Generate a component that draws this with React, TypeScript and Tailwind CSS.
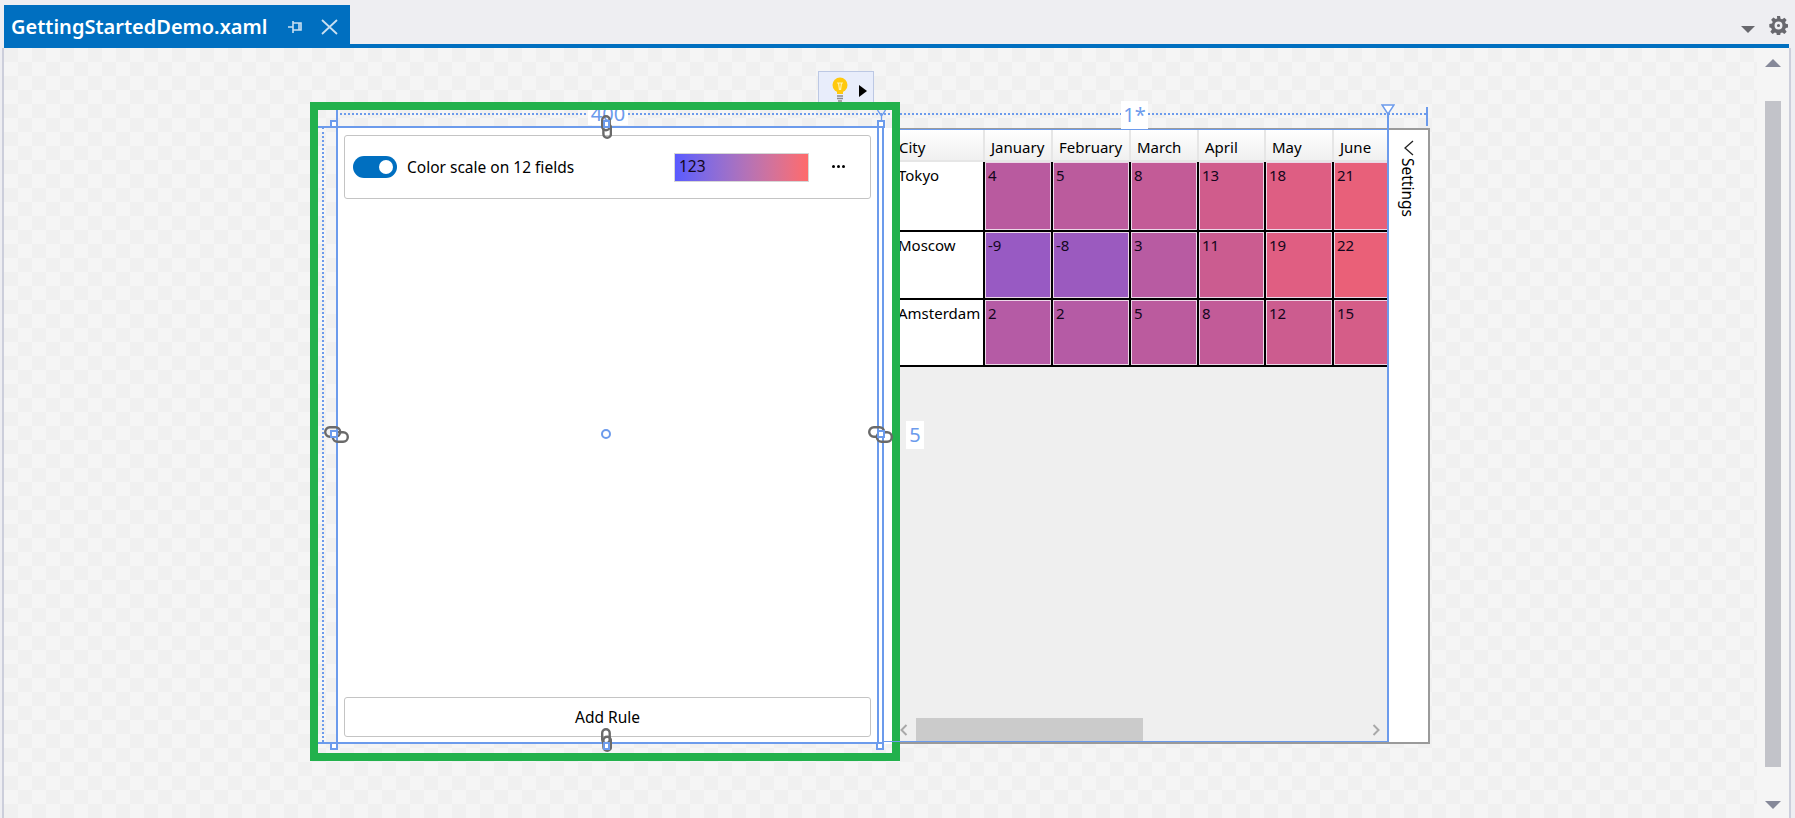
const font = "font-['Noto_Sans','Open_Sans',sans-serif]"

// one row of the data grid: city name and the month values with their scale colour
const rows = [
  {
    city: "Tokyo",
    height: "h-[70px]",
    cells: [
      { v: "4", bg: "bg-[#b95a9f]" },
      { v: "5", bg: "bg-[#bb5b9d]" },
      { v: "8", bg: "bg-[#c35b97]" },
      { v: "13", bg: "bg-[#d05c8c]" },
      { v: "18", bg: "bg-[#de5e83]" },
      { v: "21", bg: "bg-[#e8607a]" },
    ],
  },
  {
    city: "Moscow",
    height: "h-[68px]",
    cells: [
      { v: "-9", bg: "bg-[#985ac3]" },
      { v: "-8", bg: "bg-[#9b5abf]" },
      { v: "3", bg: "bg-[#b85ba2]" },
      { v: "11", bg: "bg-[#cb5c90]" },
      { v: "19", bg: "bg-[#e05e82]" },
      { v: "22", bg: "bg-[#ea6078]" },
    ],
  },
  {
    city: "Amsterdam",
    height: "h-[67px]",
    cells: [
      { v: "2", bg: "bg-[#b55ba5]" },
      { v: "2", bg: "bg-[#b55ba5]" },
      { v: "5", bg: "bg-[#bb5b9e]" },
      { v: "8", bg: "bg-[#c25b98]" },
      { v: "12", bg: "bg-[#cc5c8f]" },
      { v: "15", bg: "bg-[#d55d88]" },
    ],
  },
]

const columns = "grid grid-cols-[93px_68px_78px_68px_67px_68px_60px]"
const months = ["January", "February", "March", "April", "May", "June"]

function HeaderCell({ label, first }: { label: string; first?: boolean }) {
  return (
    <div
      className={`h-[32px] flex items-center border-r-2 border-b-2 border-[#e6e6e6] bg-gradient-to-b from-white to-[#f0f0f0] pt-[5px] text-[15px] text-black ${first ? "pl-[7px]" : "pl-[6px]"}`}
    >
      {label}
    </div>
  )
}

function DataGrid() {
  return (
    <div className="flex-1 flex flex-col min-w-0 bg-[#efefef] border-t-2 border-t-[#9a9a9a] border-b-2 border-b-[#9a9a9a] overflow-hidden">
      <div className={columns}>
        <HeaderCell label="City" first />
        {months.map((m) => (
          <HeaderCell key={m} label={m} />
        ))}
      </div>
      {rows.map((row) => (
        <div key={row.city} className={columns}>
          <div className={`${row.height} bg-white border-r-2 border-b-2 border-black pl-[6px] pt-[2px] text-[15px] text-black whitespace-nowrap`}>
            {row.city}
          </div>
          {row.cells.map((c, i) => (
            <div key={i} className={`${row.height} bg-white border-r-2 border-b-2 border-black`}>
              <div className={`h-full border border-[#ecd8e8] ${c.bg} pl-[2px] pt-[1px] text-[15px] text-[#14061c]`}>{c.v}</div>
            </div>
          ))}
        </div>
      ))}
      <div className="mt-auto h-[24px] flex items-stretch">
        <div className="w-[24px] flex items-center justify-end pr-[8px]">
          <svg width="8" height="12" viewBox="0 0 8 12" fill="none" stroke="#a8a8a8" strokeWidth="2">
            <path d="M6.5 1 1.5 6l5 5" />
          </svg>
        </div>
        <div className="w-[227px] bg-[#cbcbcb]" />
        <div className="flex-1 flex items-center justify-end pr-[8px]">
          <svg width="8" height="12" viewBox="0 0 8 12" fill="none" stroke="#a8a8a8" strokeWidth="2">
            <path d="M1.5 1 6.5 6l-5 5" />
          </svg>
        </div>
      </div>
    </div>
  )
}

function RulesPanel() {
  return (
    <div className="w-[555px] shrink-0 bg-white flex flex-col justify-between pl-[7px] pr-[21px] pt-[7px] pb-[7px]">
      <div className="h-[64px] flex items-center border border-[#c4c4c4] rounded-[3px] pl-[8px]">
        <div className="w-[44px] h-[22px] rounded-full bg-[#006fc0] flex items-center justify-end pr-[4px]">
          <div className="w-[14px] h-[14px] rounded-full bg-white" />
        </div>
        <span className="ml-[10px] pt-[1px] text-[15.5px] text-black">Color scale on 12 fields</span>
        <div className="ml-auto w-[135px] h-[29px] border border-[#d6d6d6] bg-gradient-to-r from-[#5a5aff] to-[#ff6a6a] flex items-center pl-[4px] text-[15.5px] text-[#14061c]">
          123
        </div>
        <div className="w-[61px] flex justify-center gap-[2px] pb-[2px] pr-[3px]">
          <div className="w-[3px] h-[3px] rounded-full bg-black" />
          <div className="w-[3px] h-[3px] rounded-full bg-black" />
          <div className="w-[3px] h-[3px] rounded-full bg-black" />
        </div>
      </div>
      <button className="h-[40px] w-full border border-[#c4c4c4] rounded-[3px] bg-white pt-[2px] text-[15.5px] text-black">Add Rule</button>
    </div>
  )
}

function Handle({ className }: { className: string }) {
  return <div className={`absolute w-[8px] h-[8px] border-2 border-[#6c9bec] bg-white ${className}`} />
}

function ChainLink({ className }: { className: string }) {
  return (
    <svg className={`absolute ${className}`} width="25" height="17" viewBox="0 0 25 17" fill="none" stroke="#6a6a6a" strokeWidth="2.4">
      <rect x="1.2" y="1.2" width="15" height="9.5" rx="4.7" />
      <rect x="8.8" y="6.2" width="15" height="9.5" rx="4.7" />
    </svg>
  )
}

function ChainLinkVertical({ className }: { className: string }) {
  return (
    <svg className={`absolute ${className}`} width="11" height="24" viewBox="0 0 11 24" fill="none" stroke="#6a6a6a" strokeWidth="2.4">
      <rect x="1.2" y="1.2" width="7.5" height="14" rx="3.7" />
      <rect x="2.4" y="8.8" width="7.5" height="14" rx="3.7" />
    </svg>
  )
}

// design time adorners lie over the form, offsets are relative to the canvas
function Adorners() {
  return (
    <>
      <div className="absolute left-[332px] top-[65px] w-[1090px] border-t-2 border-dotted border-[#6c9bec]" />
      <div className="absolute left-[318px] top-[79px] h-[615px] border-l-2 border-dotted border-[#6c9bec]" />

      <div className="absolute left-[584px] top-[54px] w-[40px] h-[23px] bg-white flex items-center justify-center text-[20px] leading-none text-[#6c9bec]">400</div>
      <div className="absolute left-[1117px] top-[53px] w-[27px] h-[28px] bg-white flex items-center justify-center text-[20px] leading-none text-[#6c9bec]">1*</div>
      <div className="absolute left-[902px] top-[373px] w-[18px] h-[28px] bg-white flex items-center justify-center text-[20px] leading-none text-[#6c9bec]">5</div>

      <div className="absolute left-[814px] top-[23px] w-[56px] h-[35px] border border-[#bcc8e4] bg-[#e8edfb] flex items-start gap-[11px] pl-[13px] pt-[5px]">
        <svg width="16" height="27" viewBox="0 0 16 27">
          <circle cx="8" cy="8" r="7.5" fill="#ffc90e" />
          <path d="M5 14h6v3H5z" fill="#ffc90e" />
          <path d="M5 6h6M6.5 6l1 7M9.5 6l-1 7" stroke="#fff2b0" strokeWidth="1.2" fill="none" />
          <path d="M5 19h6M5 21.5h6M6 24h4" stroke="#8c8c8c" strokeWidth="1.4" />
        </svg>
        <svg className="mt-[8px]" width="8" height="12" viewBox="0 0 8 12">
          <path d="M0 0 8 6 0 12z" fill="#000" />
        </svg>
      </div>

      <div className="absolute left-[306px] top-[54px] w-[590px] h-[659px] border-8 border-[#22b14c]" />

      <div className="absolute left-[314px] top-[78px] w-[562px] h-[2px] bg-[#6c9bec]" />
      <div className="absolute left-[314px] top-[694px] w-[562px] h-[2px] bg-[#6c9bec]" />
      <div className="absolute left-[896px] top-[81px] w-[488px] h-px bg-[#6c9bec]" />
      <div className="absolute left-[880px] top-[693px] w-[504px] h-px bg-[#6c9bec]" />
      <div className="absolute left-[332px] top-[62px] w-[2px] h-[634px] bg-[#6c9bec]" />
      <div className="absolute left-[873px] top-[72px] w-[2px] h-[624px] bg-[#6c9bec]" />
      <div className="absolute left-[878px] top-[79px] w-[2px] h-[617px] bg-[#6c9bec]" />
      <div className="absolute left-[1383px] top-[66px] w-[2px] h-[628px] bg-[#6c9bec]" />
      <div className="absolute left-[1422px] top-[59px] w-[2px] h-[19px] bg-[#6c9bec]" />

      <svg className="absolute left-[1377px] top-[56px]" width="14" height="11" viewBox="0 0 14 11" fill="#fff" stroke="#6c9bec" strokeWidth="1.5">
        <path d="M1 1h12L7 10z" />
      </svg>
      <svg className="absolute left-[873px] top-[62px]" width="9" height="10" viewBox="0 0 9 10" fill="none" stroke="#6c9bec" strokeWidth="1.3">
        <path d="M.5 0 4.5 6l4-6M4.5 6v4" />
      </svg>

      <div className="absolute left-[597px] top-[381px] w-[10px] h-[10px] rounded-full border-2 border-[#6c9bec] bg-white" />

      <ChainLink className="left-[320px] top-[378px]" />
      <ChainLink className="left-[864px] top-[378px]" />
      <ChainLinkVertical className="left-[597px] top-[67px]" />
      <ChainLinkVertical className="left-[597px] top-[680px]" />

      <Handle className="left-[326px] top-[72px]" />
      <Handle className="left-[873px] top-[72px]" />
      <Handle className="left-[326px] top-[694px]" />
      <Handle className="left-[872px] top-[694px]" />
      <Handle className="left-[326px] top-[382px]" />
      <Handle className="left-[873px] top-[382px]" />
      <Handle className="left-[599px] top-[72px] !w-[7px]" />
      <Handle className="left-[599px] top-[694px] !w-[7px]" />
    </>
  )
}

export default function App() {
  return (
    <div className={`${font} w-[1795px] h-[818px] flex flex-col bg-[#eeeef2] overflow-hidden`}>
      {/* Tab strip */}
      <div className="h-[44px] shrink-0 flex items-stretch pl-[4px] pt-[5px]">
        <div className="w-[346px] bg-[#006fc0] flex items-center pl-[7px] -mb-[4px]">
          <span className="text-[20px] font-semibold text-white w-[277px]">GettingStartedDemo.xaml</span>
          <svg width="14" height="14" viewBox="0 0 14 14" fill="none" stroke="#c9dff0" strokeWidth="1.6">
            <path d="M0 7h5M5 1v12M5 3h8v7H5M11 3v7" />
          </svg>
          <svg className="ml-[19px]" width="17" height="16" viewBox="0 0 17 16" fill="none" stroke="#c9dff0" strokeWidth="1.8">
            <path d="M1 1l15 14M16 1 1 15" />
          </svg>
        </div>
        <div className="ml-auto flex items-center gap-[14px] pr-[7px] pt-[1px]">
          <svg className="mt-[8px]" width="14" height="7" viewBox="0 0 14 7">
            <path d="M0 0h14L7 7z" fill="#68686e" />
          </svg>
          <svg width="19" height="19" viewBox="0 0 24 24" fill="#68686e" fillRule="evenodd">
            <path d="M10 0h4l.6 3.400 2 .8L19.500 2.300l2.800 2.800-2 2.800.9 2 3.400.6v4l-3.400.6-.9 2 2 2.800-2.800 2.800-2.900-1.900-2 .8-.6 3.400h-4l-.6-3.400-2-.8-2.900 1.900-2.800-2.800 2-2.800-.9-2L.4 14.100v-4l3.400-.6.9-2-2-2.800 2.800-2.800 2.900 1.900 2-.8zM12 7a5 5 0 1 0 0 10 5 5 0 0 0 0-10zm0 3a2 2 0 1 1 0 4 2 2 0 0 1 0-4z" />
          </svg>
        </div>
      </div>
      <div className="h-[4px] shrink-0 ml-[4px] mr-[6px] bg-[#006fc0]" />

      {/* Designer surface */}
      <div className="flex-1 min-h-0 flex ml-[2px] mr-[4px] border-l-2 border-r-2 border-[#cccedb]">
        <div className="relative flex-1 overflow-hidden bg-[repeating-conic-gradient(#f5f5f5_0%_25%,#f0f0f0_0%_50%)] bg-[length:28px_28px]">
          <div className="absolute left-[333px] top-[80px] w-[1093px] h-[616px] flex">
            <RulesPanel />
            <DataGrid />
            <div className="w-[42px] shrink-0 bg-white border-t-2 border-r-2 border-b-2 border-[#9a9a9a] flex flex-col items-center pt-[10px] pr-[2px] gap-[2px]">
              <svg className="ml-[3px]" width="10" height="16" viewBox="0 0 10 16" fill="none" stroke="#222" strokeWidth="1.3">
                <path d="M9 1 1 8l8 7" />
              </svg>
              <span className="[writing-mode:vertical-rl] text-[15.5px] text-black">Settings</span>
            </div>
          </div>
          <Adorners />
        </div>
        <div className="w-[32px] shrink-0 bg-[#f5f5f5] flex flex-col items-center justify-between pt-[11px] pb-[9px]">
          <svg width="16" height="8" viewBox="0 0 16 8">
            <path d="M8 0l8 8H0z" fill="#868999" />
          </svg>
          <div className="flex-1 w-[16px] mt-[34px] mb-[34px] bg-[#c2c3c9]" />
          <svg width="16" height="8" viewBox="0 0 16 8">
            <path d="M0 0h16L8 8z" fill="#868999" />
          </svg>
        </div>
      </div>
    </div>
  )
}
